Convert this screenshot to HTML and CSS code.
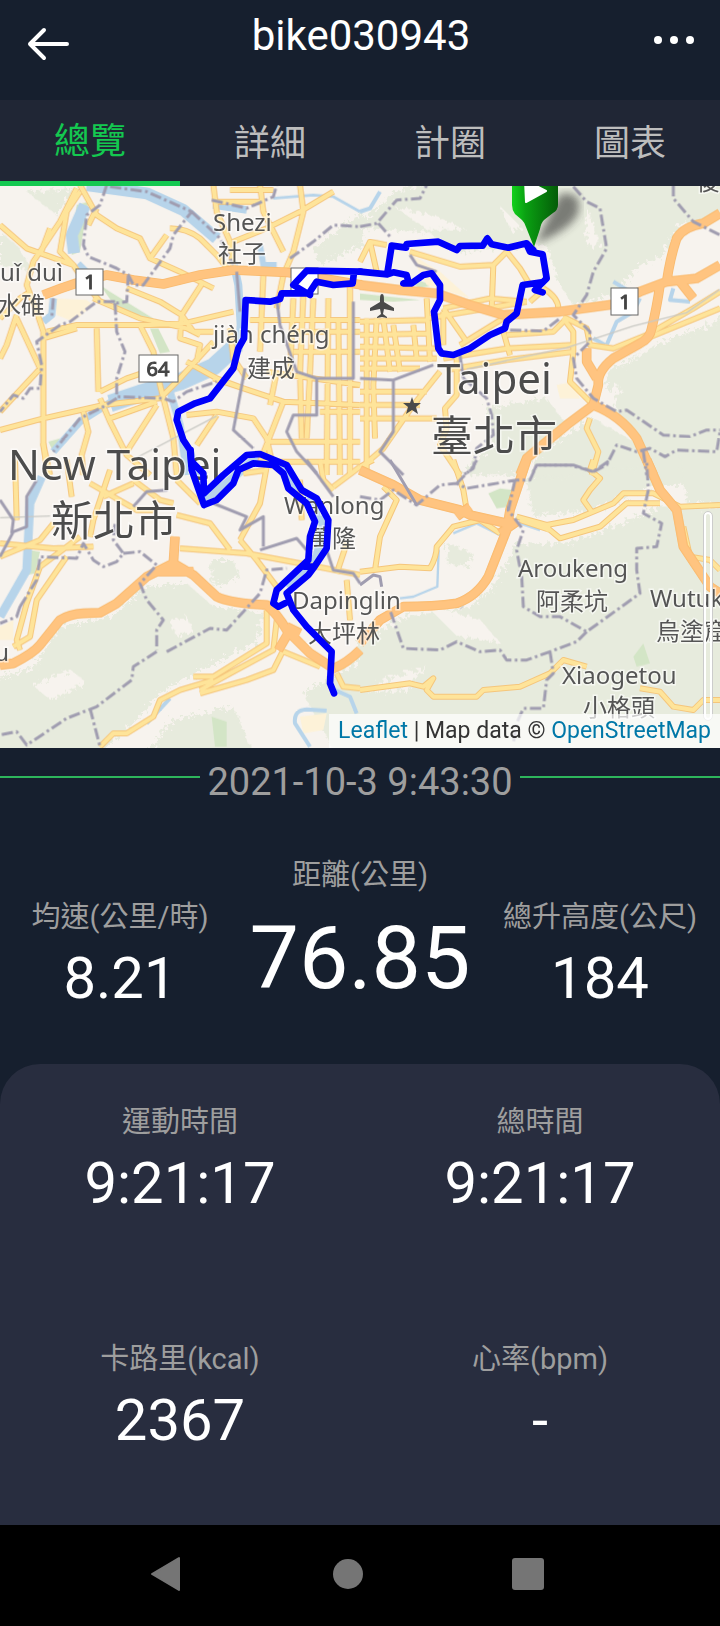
FILE: index.html
```html
<!DOCTYPE html>
<html lang="zh-Hant">
<head>
    <meta charset="UTF-8">
    <meta name="viewport" content="width=device-width, initial-scale=1.0">
    <title>bike030943</title>
    <link rel="stylesheet" href="styles.css">
</head>
<body>
    <header class="topbar">
        <button class="icon-button" aria-label="返回">
            <svg width="44" height="36" viewBox="0 0 44 36"><path d="M41 18H4M18 4L4 18l14 14" fill="none" stroke="#fff" stroke-width="4" stroke-linecap="round" stroke-linejoin="round"/></svg>
        </button>
        <h1>bike030943</h1>
        <button class="icon-button more" aria-label="更多">
            <svg width="44" height="12" viewBox="0 0 44 12" fill="#fff"><circle cx="6" cy="6" r="4"/><circle cx="22" cy="6" r="4"/><circle cx="38" cy="6" r="4"/></svg>
        </button>
    </header>

    <nav class="tabs">
        <button class="tab active">總覽</button>
        <button class="tab">詳細</button>
        <button class="tab">計圈</button>
        <button class="tab">圖表</button>
    </nav>

    <div class="map">
        <svg class="tiles" viewBox="0 0 720 562" preserveAspectRatio="xMidYMid slice">
            <defs>
                <filter id="rough" x="0" y="0" width="100%" height="100%">
                    <feTurbulence type="fractalNoise" baseFrequency="0.08" numOctaves="3" seed="4"/>
                    <feDisplacementMap in="SourceGraphic" scale="40"/>
                </filter>
                <filter id="soft"><feGaussianBlur stdDeviation="4"/></filter>
                <linearGradient id="pin">
                    <stop offset="0" stop-color="#12d01c"/>
                    <stop offset="0.3" stop-color="#0aa012"/>
                    <stop offset="1" stop-color="#045c08"/>
                </linearGradient>
                <g id="roads">
                    <path transform="translate(0 -3)" d="M0 120L80 190 150 215 220 240M230 10L180 110 100 230 80 300 110 380 130 440V780L150 870M240 20L200 80 180 200 220 240 260 300 300 350M150 130L120 210M240 0L290 90 350 130 420 160Q440 200 450 220L540 260 640 310M510 130Q560 130 600 160L650 210 690 260M450 220L500 150M290 70L265 120M640 0L650 80 690 170 700 260M640 50H780M780 0L790 80 850 200M700 170L800 130 900 80 1000 20M900 0L910 80 880 200 850 270 830 370M690 15H820M0 400L60 340 90 320M50 390L20 480 0 520M50 400L120 550M140 440L230 420H450L550 415 700 380M290 430L295 620M130 460L230 430M280 340L420 400 560 430 600 450M380 310L480 350 545 390 580 440 640 440M610 290L545 390 540 460 600 480 590 530M420 420L460 500 480 600 520 760 530 870M0 680L130 540M0 735L130 700 310 660 480 640 540 580 640 470M300 620L380 580 440 560M300 640L330 710 380 810 450 870M330 700L470 650M470 660L380 800M250 680L265 740 245 810 250 870M560 690L650 680 760 700 800 760 820 850M650 690L590 780M640 580L850 650 1080 660M560 530L650 580 730 610M690 430L700 520 740 580M790 270L780 500M830 560L810 660M880 340L870 560M910 330L900 560 905 760M940 340L930 560 920 760M985 340L980 870M1015 400L1020 870M1050 300V870M750 405H1080M890 440H1080M880 500H1080M800 560L1080 600M960 680H1080M800 770H1080M780 830H1080M850 650L780 830"/>
                    <path transform="translate(1080 -3)" d="M0 230L30 170 80 180M30 170L50 260M150 200L300 245 400 240 440 200 480 250 510 300M400 240L395 370M200 340L210 530M250 370L390 340 500 350M250 370L320 470M250 380V480M550 310Q600 340 595 380M510 350L550 315M0 410L200 405M0 450L210 445M0 485L230 490M0 520H230M200 400L500 350M250 520L440 490 640 480M430 440L450 510M440 450L580 440 620 400M260 555L440 525 640 500M610 400L640 440V500L630 590 700 660M610 395L680 430 690 480 760 490 860 450 1000 370 1080 320M860 460L1080 370M20 400V870M50 400L40 600 45 760M70 400L90 560M100 420L120 560M160 420L170 520M0 550L180 550M0 620H200M0 660H180M0 700H230M240 560L160 660 70 790 0 850M290 500V630L255 670 260 730 240 780 300 870M690 700L680 730 715 800 695 870M430 400L300 480"/>
                    <path transform="translate(0 822)" d="M45 0L50 180M130 -50L140 30M200 0L215 110M270 70L410 150H460M400 70L310 110M330 30L280 180 270 230M400 60L480 120 520 130M0 250L160 265 280 260M240 230L120 320 80 430 50 540 60 570M200 290L110 420 90 530 40 560M160 190L120 240 0 290M530 165L630 190 690 270M540 265L740 280 900 310 1080 345M720 240L770 300 830 380M800 20L780 130 720 240M530 60L600 130M730 40L800 30M800 450V550L640 650H580M830 480L820 570 690 640 600 690M850 570L820 630 740 660 600 700M300 860L340 820H380L460 770 480 720 540 690 640 660M850 575L960 620M1010 640L1030 680 1080 685M960 0L970 60 1000 90M1000 80L1080 20M900 60L905 180M1040 250L1010 340M1040 360L1050 480"/>
                    <path transform="translate(1080 822)" d="M280 0L310 90 320 150M70 80L110 120 60 230 45 330M0 335L120 320 210 325Q230 290 230 260L280 200 360 180 420 220M480 180L570 210 600 235 720 200 800 130H900M470 170L560 195 640 180 760 130 790 100H880L960 140 1080 135M565 195V215M700 0L690 30 720 55 690 90 670 120 695 155M970 200L990 290 1050 300 1080 330M0 690L150 670 190 680 220 655 200 690 220 710H350L370 690 480 680 570 640 610 600 680 620M840 685L900 695 940 740 1000 750 1030 720H1080M0 20L40 0"/>
                </g>
                <g id="motorways">
                    <path transform="translate(0 -3)" d="M130 330Q230 290 320 270L400 285 490 297 600 270 700 255 860 262 1085 300"/>
                    <path transform="translate(1080 -3)" d="M0 300L120 315 230 325 330 360 430 390 600 380 760 358 840 320 920 290 1010 280 1080 240M920 290Q930 220 950 160 970 125 1030 115L1080 85M900 300Q890 370 875 430 870 460 840 475L760 520Q710 560 715 600L700 660 620 720 560 770 500 820 480 870M700 660Q780 690 830 760L880 870M680 490V530L710 580M960 290L1000 340"/>
                    <path transform="translate(0 822)" d="M0 615L40 610Q100 580 120 555L180 480Q210 462 250 460L300 458 350 430 440 350 520 310 580 345 650 410Q690 430 800 435 830 460 860 510L930 580 1000 625Q1040 610 1080 570M520 310L525 230M870 510L835 570M470 335L580 335M860 500L900 520"/>
                    <path transform="translate(1080 822)" d="M0 550L60 480 130 440Q220 440 290 430 350 410 385 350L440 210 450 150 500 0M0 30L100 75 180 120 300 150 330 165 440 190M290 170L330 140M420 220L470 185M860 0L900 90 950 150 970 260 1050 380 1080 400"/>
                </g>
            </defs>

            <!-- ground, drawn at three units to the pixel -->
            <g transform="scale(0.33333)">
                <g class="hills" filter="url(#rough)">
                    <path transform="translate(0 -3)" d="M0 140L50 180 100 260 0 240ZM80 20L220 10 170 90ZM940 190L1090 80V180L960 240Z"/>
                    <path transform="translate(1080 -3)" d="M0 110L110 20 260 -20H1120V90L960 120 900 220 840 240 760 330 640 360 600 300 560 180 300 200 200 140 0 130ZM740 560L880 480 1100 400V900H820L840 760 740 650ZM380 670L560 640 620 720 540 800 480 870H300L400 780ZM540 800L700 700 840 780 850 900H500Z"/>
                    <path transform="translate(0 822)" d="M180 500L330 470 440 380 560 370 640 440 790 460 770 550 600 630 480 700 400 790 300 880H-20V660L100 620ZM440 880L520 780 700 740 760 880ZM630 300L700 300 720 350 640 380ZM910 700L1090 600V880L1000 870Z"/>
                    <path transform="translate(1080 822)" d="M-10 540L140 470 330 440 400 380 470 250 620 250 760 200 900 140 1100 140V900H-10ZM500 60L860 20 880 80 700 150 520 170ZM960 -20H1100V130H980ZM260 250L340 280 320 320 260 310Z"/>
                </g>
                <g class="clearings" filter="url(#rough)">
                    <path d="M1180 60L1300 90 1400 130 1280 130ZM1500 60L1560 120 1540 150ZM1760 60L1800 180 1760 180ZM1860 550L2000 430 2110 400 1960 480ZM1280 1260L1440 1300 1500 1370 1370 1350ZM1100 1520L1220 1510 1280 1440 1160 1480ZM510 1310L560 1290 580 1340 530 1350ZM100 1500L210 1450 260 1490 150 1540ZM1800 620L1860 600 1840 680Z"/>
                </g>
                <g class="park">
                    <path transform="translate(0 -3)" d="M230 60L265 50 240 200 215 210ZM300 300L330 320 460 400 440 412 350 370ZM450 430L475 430 510 500 480 505ZM145 770L180 760 160 800Z"/>
                    <path transform="translate(0 822)" d="M85 270L120 275 105 340 80 345ZM635 770L680 785V860H645Z"/>
                    <path transform="translate(1080 822)" d="M385 100L420 85 460 90 450 140 410 145ZM820 590L850 550 870 610 830 620Z"/>
                    <path transform="translate(1080 -3)" d="M0 325L180 345 100 350 0 345ZM120 270L220 300 180 310Z"/>
                </g>
                <g class="built">
                    <path transform="translate(0 -3)" d="M165 340L260 345 280 360 220 410 170 390Z"/>
                    <path transform="translate(1080 -3)" d="M150 205L240 260 330 340 200 300ZM590 600L640 590 660 640 600 640Z"/>
                    <path transform="translate(0 822)" d="M0 500L40 480V540H0ZM900 770L980 760 970 810 910 820Z"/>
                </g>
                <g class="river">
                    <path transform="translate(0 -3)" d="M260 0L440 25 550 75 650 160" stroke-width="36"/>
                    <path transform="translate(0 -3)" d="M255 60L215 150 222 205" stroke-width="36"/>
                    <path transform="translate(0 -3)" d="M700 230L715 300 722 420 715 500" stroke-width="24"/>
                    <path transform="translate(0 -3)" d="M700 490L640 545 540 590 420 625 330 655" stroke-width="52"/>
                    <path transform="translate(0 -3)" d="M335 650L240 710 160 800M510 620L540 720 560 870M160 340L155 390 130 410M640 60L740 75" stroke-width="22"/>
                    <path transform="translate(0 -3)" d="M820 40L940 30 1000 35 1080 80" stroke-width="8"/>
                    <path transform="translate(0 -3)" d="M780 180L790 240 830 240M235 235L260 260" stroke-width="18"/>
                    <path transform="translate(1080 -3)" d="M0 80L30 70 60 20M760 290L810 320M740 480L770 410 820 380 840 340M700 460L735 480M940 310L930 345 990 350" stroke-width="12"/>
                    <path transform="translate(0 822)" d="M125 50L90 130 80 330 40 400 0 470M570 -20L590 60 612 120 680 70 760 0 830 10 880 80 950 130 970 200 950 290 860 380" stroke-width="26"/>
                    <path transform="translate(0 822)" d="M930 860L885 790Q880 750 920 748L980 752M1005 690L1050 710 1070 760M440 790L510 715" stroke-width="12"/>
                    <path transform="translate(1080 822)" d="M236 270L232 380 160 410 120 415M280 220L350 190 430 230M480 190L540 210" stroke-width="7"/>
                </g>
                <use href="#roads" class="road-edge"/>
                <use href="#roads" class="road"/>
                <use href="#motorways" class="motorway-edge"/>
                <use href="#motorways" class="motorway"/>
                <g class="railway">
                    <path d="M1380 1270L1390 1260M1400 550L1700 485 1900 420 2060 380 2160 310M0 995L150 990M400 820L650 690"/>
                </g>
                <g class="border">
                    <path transform="translate(0 -3)" d="M320 0L300 60 260 90 250 180 265 215 350 250 385 270 380 350 345 355M330 5L440 20 575 80 520 150 510 190 430 300H400L385 270M575 80L660 160 700 240M635 45L740 70 820 35 830 0M870 220L940 170 1000 120 1080 125M345 355L350 440 375 500 350 580V635L490 640 520 650 560 620 650 590M350 640L310 665 240 700 160 800M345 350H290L210 410 180 420 110 470 125 540 120 610H90L70 640 40 630 0 680M160 340L155 400"/>
                    <path transform="translate(1080 -3)" d="M0 125L50 115 110 45 180 40 200 0M55 115L95 160M640 5L680 50 720 70 740 190 700 260 680 330 640 390 690 440V470L640 520 650 580 700 640 770 680 800 675 910 750 990 755 1040 735H1080M940 0V40L1000 110 1080 150M450 435L550 438 600 400M310 580L380 640 395 690 400 750 350 790 340 850 310 870M700 860L740 840 770 780 830 800 870 790 915 815 950 795 1070 800 1080 740M520 860L530 840H640L700 860M850 800L860 870"/>
                    <path transform="translate(0 822)" d="M60 440L110 360 120 290 230 295 250 250 280 300 310 320 350 305 370 280 340 240 345 190M370 280L420 275 470 315 420 370 440 420 490 480 470 510V570M500 575L630 505 680 510 780 400 800 330 860 325M470 575L400 620 395 660 290 740 200 775 80 855 50 815 0 825M270 745L300 860M60 440L50 470 0 490"/>
                    <path transform="translate(1080 822)" d="M0 110L60 120 100 90 170 135 240 75 290 70 320 85 470 60H510L530 15H630L700 35 750 0M290 70L340 20 350 0M465 60L445 150 490 210 470 270 485 350 490 440 540 470H600L680 515 840 400 830 330V265L890 260 905 190 850 160 865 90 860 0M680 515L650 545 570 575 500 600H440L420 570 360 575 290 545 240 570 130 565 90 450M570 575L580 640 560 660 550 745H490L470 790 460 850"/>
                </g>
                <g class="border solid">
                    <path transform="translate(0 -3)" d="M735 550L700 735 760 790M830 340L840 420 890 560 950 580V690H880L860 740 890 800 950 865M710 260L720 380M1060 350V580H950"/>
                    <path transform="translate(1080 -3)" d="M150 210L170 240 230 260M0 580L100 585 220 540M100 585V740L60 800 130 870M300 510L310 580"/>
                    <path transform="translate(0 822)" d="M110 60L80 110V200L40 215 0 290M0 120L40 180 35 220M400 140L440 95 500 90V50M640 130L740 170 720 210 790 170V260M780 270L890 235 920 270M920 0L1000 110M980 270L1000 330 1060 340 1080 370"/>
                    <path transform="translate(1080 822)" d="M90 0L170 135M0 375L40 345 60 350 65 380"/>
                </g>
            </g>

            <!-- road number shields -->
            <g class="shield">
                <rect x="76" y="83" width="27" height="26"/>
                <rect x="139" y="169" width="39" height="27"/>
                <rect x="291" y="82" width="27" height="26"/>
                <rect x="611" y="102" width="27" height="27"/>
                <text x="90" y="103">1</text>
                <text x="158" y="190">64</text>
                <text x="625" y="123">1</text>
            </g>
            <path class="symbol" d="M382 108c2 0 2 3 2 8l10 6v3l-10-2-1 5 4 3v1l-5-1-5 1v-1l4-3-1-5-10 2v-3l10-6c0-5 0-8 2-8z"/>
            <path class="symbol" d="M412 211l2 6h7l-5 4 2 7-6-4-6 4 2-7-5-4h7z"/>

            <g class="place">
                <text x="213" y="45">Shezi</text>
                <text x="218" y="76">社子</text>
                <text x="63" y="95" text-anchor="end">shuǐ duì</text>
                <text x="45" y="128" text-anchor="end">水碓</text>
                <text x="213" y="157">jiàn chéng</text>
                <text x="247" y="191">建成</text>
                <text x="284" y="328">Wanlong</text>
                <text x="308" y="361">萬隆</text>
                <text x="292" y="423">Dapinglin</text>
                <text x="308" y="456">大坪林</text>
                <text x="518" y="391">Aroukeng</text>
                <text x="536" y="424">阿柔坑</text>
                <text x="650" y="421">Wutukeng</text>
                <text x="656" y="454">烏塗窟</text>
                <text x="562" y="498">Xiaogetou</text>
                <text x="583" y="530">小格頭</text>
                <text x="696" y="4">後</text>
                <text x="9" y="475" text-anchor="end">u</text>
            </g>
            <g class="place city">
                <text x="437" y="208">Taipei</text>
                <text x="431" y="265">臺北市</text>
                <text x="8" y="294">New Taipei</text>
                <text x="51" y="350">新北市</text>
            </g>

            <!-- recorded track -->
            <g class="track" transform="scale(0.33333)">
                <path transform="translate(1080 -3)" d="M520 195L500 175 445 188 395 178 382 160 368 182 300 183 290 195 235 170 140 177 138 188 95 182 82 265M500 178L510 200 548 208 560 280 545 295 525 315 548 322M545 292L488 300 470 385 440 410 435 430 390 450 330 490 280 510 245 505 235 490 222 380 240 345V300L215 265 190 270 155 295H130L145 290 140 270 100 262 82 268 0 260"/>
                <path transform="translate(0 -3)" d="M1082 260L920 257 880 300 930 330V320L950 290 1000 300 1058 295 1062 262M930 325L845 325 840 342 810 350 737 345 732 460 715 490 700 550 630 640 585 655 535 680 530 705 550 765 570 795 574 840"/>
                <path transform="translate(0 822)" d="M572 -30L575 30 612 135 650 120 700 70 715 30 760 10 820 15 850 40 865 85 920 130 945 185 930 230 925 300 830 390 820 430 835 440 855 430M575 5L610 40 612 100 670 45 740 -15 780 -18 860 15 905 90 950 115 985 180 980 265 940 325 925 345 860 400 880 450 920 500 995 575 990 670 1002 700M915 320H940"/>
            </g>

            <path d="M535 58L560 8q24-4 18 20-8 16-43 30z" fill="#333" opacity="0.6" filter="url(#soft)"/>
            <path d="M512-6h46v25q0 5-5 8l-9 7q-3 3-4 9l-6 18-8-20q-1-4-4-7l-7-6q-3-4-3-9z" fill="url(#pin)"/>
            <path d="M525-6L546 5 526 16z" fill="#fff" stroke="#fff" stroke-width="2" stroke-linejoin="round"/>
        </svg>
        <div class="scrollbar"></div>
        <div class="attribution"><a href="#">Leaflet</a> | Map data © <a href="#">OpenStreetMap</a></div>
    </div>

    <main>
        <div class="date"><span>2021-10-3 9:43:30</span></div>

        <section class="summary">
            <div class="stat">
                <div class="label">均速(公里/時)</div>
                <div class="value">8.21</div>
            </div>
            <div class="stat main-stat">
                <div class="label">距離(公里)</div>
                <div class="value">76.85</div>
            </div>
            <div class="stat">
                <div class="label">總升高度(公尺)</div>
                <div class="value">184</div>
            </div>
        </section>

        <section class="card">
            <div class="stat">
                <div class="label">運動時間</div>
                <div class="value">9:21:17</div>
            </div>
            <div class="stat">
                <div class="label">總時間</div>
                <div class="value">9:21:17</div>
            </div>
            <div class="stat">
                <div class="label">卡路里(kcal)</div>
                <div class="value">2367</div>
            </div>
            <div class="stat">
                <div class="label">心率(bpm)</div>
                <div class="value">-</div>
            </div>
        </section>
    </main>

    <footer class="navbar">
        <button aria-label="上一頁"><svg width="36" height="36" viewBox="0 0 36 36"><path d="M29 2v32L2 18z" fill="#757575" stroke="#757575" stroke-width="2" stroke-linejoin="round"/></svg></button>
        <button aria-label="主畫面"><svg width="36" height="36" viewBox="0 0 36 36"><circle cx="18" cy="18" r="15" fill="#757575"/></svg></button>
        <button aria-label="最近使用"><svg width="36" height="36" viewBox="0 0 36 36"><rect x="2" y="2" width="32" height="32" rx="3" fill="#757575"/></svg></button>
    </footer>
</body>
</html>
```

FILE: styles.css
```css
* {
    box-sizing: border-box;
}
body {
    margin: 0;
    min-height: 100vh;
    display: flex;
    flex-direction: column;
    font-family: Roboto, "Noto Sans CJK TC", sans-serif;
    background-color: #161f2e;
    color: #fff;
}
button {
    border: none;
    padding: 0;
    background: none;
    color: inherit;
    font-family: inherit;
    cursor: pointer;
}
svg {
    display: block;
}

/* top bar */
.topbar {
    display: flex;
    justify-content: space-between;
    align-items: flex-start;
    height: 100px;
    padding: 12px 24px 12px 26px;
}
.topbar h1 {
    margin: 0;
    font-size: 42px;
    line-height: 48px;
    font-weight: 400;
}
.icon-button {
    display: flex;
    align-items: center;
    height: 64px;
}
.more {
    height: 56px;
}

/* tabs */
.tabs {
    display: flex;
    height: 86px;
    background-color: #202635;
}
.tab {
    flex: 1;
    padding-bottom: 6px;
    font-size: 36px;
    color: #bdbdbd;
}
.tab.active {
    color: #14c850;
    border-bottom: 5px solid #14c850;
}

/* map */
.map {
    position: relative;
    height: 562px;
    overflow: hidden;
    background-color: #f7f3ee;
}
.tiles {
    width: 100%;
    height: 100%;
}
.hills {
    fill: #e7ebdd;
}
.clearings {
    fill: #f7f3ee;
}
.park {
    fill: #d3e5c6;
}
.built {
    fill: #fdf2d8;
}
.river, .railway, .border, .track, .road, .road-edge, .motorway, .motorway-edge {
    fill: none;
    stroke-linejoin: round;
}
.river {
    stroke: #b7d4ea;
}
.road-edge {
    stroke: #f5c67c;
    stroke-width: 18;
}
.road {
    stroke: #fee49a;
    stroke-width: 12;
}
.motorway-edge {
    stroke: #f9b96c;
    stroke-width: 29;
}
.motorway {
    stroke: #ffc480;
    stroke-width: 24;
}
.railway {
    stroke: #c9c9c4;
    stroke-width: 4;
}
.border {
    stroke: #a09db0;
    stroke-width: 9;
    stroke-dasharray: 34 10 8 10;
}
.border.solid {
    stroke-dasharray: none;
}
.track {
    stroke: #0000fa;
    stroke-width: 20;
    stroke-linecap: round;
}
.shield rect {
    fill: #fff;
    stroke: #666;
    stroke-width: 1;
}
.shield text {
    font: 20px "Noto Sans", sans-serif;
    fill: #444;
    stroke: #444;
    stroke-width: 1;
    text-anchor: middle;
}
.symbol {
    fill: #4a4a4a;
}
.place {
    font-family: "Noto Sans", "Noto Sans CJK TC", sans-serif;
    font-size: 24px;
    fill: #555;
    stroke: #fff;
    stroke-opacity: 0.6;
    stroke-width: 3;
    paint-order: stroke;
}
.city {
    font-size: 42px;
    fill: #4c4c4c;
}
.scrollbar {
    position: absolute;
    right: 8px;
    bottom: 28px;
    width: 8px;
    height: 208px;
    border: 2px solid #fff;
    border-radius: 4px;
    outline: 1px solid #ccc;
}
.attribution {
    position: absolute;
    right: 0;
    bottom: 0;
    padding: 0 9px;
    font-size: 23px;
    line-height: 34px;
    color: #333;
    background-color: rgba(255, 255, 255, 0.7);
}
.attribution a {
    color: #0078a8;
    text-decoration: none;
}

/* date with a rule on both sides */
main {
    flex: 1;
    display: flex;
    flex-direction: column;
}
.date {
    display: flex;
    gap: 7px;
    font-size: 38px;
    line-height: 44px;
    color: #9e9e9e;
    padding-top: 12px;
}
.date::before, .date::after {
    content: "";
    flex: 1;
    height: 2px;
    margin-top: 16px;
    background-color: #2eb55c;
}

/* numbers */
.stat {
    text-align: center;
}
.label {
    font-size: 29px;
    line-height: 40px;
    color: #9e9e9e;
}
.value {
    font-size: 58px;
    line-height: 68px;
    margin-top: 7px;
}
.summary {
    display: grid;
    grid-template-columns: 1fr 1fr 1fr;
    align-items: end;
    padding: 51px 0 52px;
}
.main-stat .value {
    font-size: 88px;
    line-height: 104px;
    margin-top: 11px;
    margin-bottom: 2px;
}
.card {
    flex: 1;
    display: grid;
    grid-template-columns: 1fr 1fr;
    align-content: start;
    row-gap: 122px;
    padding: 38px 0;
    border-radius: 40px 40px 0 0;
    background-color: #282d3f;
}

/* system buttons */
.navbar {
    display: flex;
    height: 101px;
    padding: 0 102px 4px 78px;
    background-color: #000;
}
.navbar button {
    flex: 1;
    display: flex;
    justify-content: center;
    align-items: center;
}
```
